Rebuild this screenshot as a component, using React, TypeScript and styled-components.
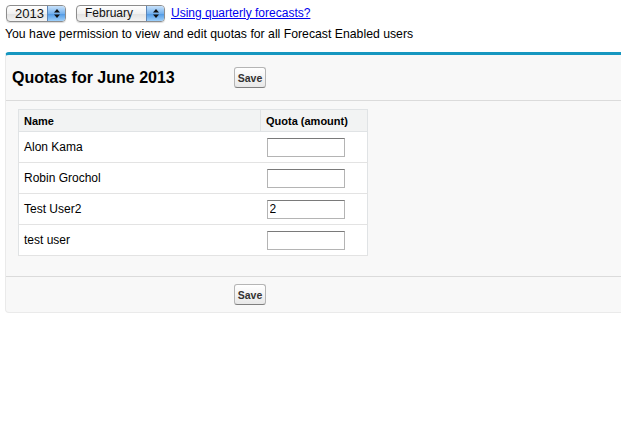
import React from "react";
import styled, { createGlobalStyle } from "styled-components";

const Global = createGlobalStyle`
  html, body { margin: 0; padding: 0; background: #fff; overflow-x: hidden; }
  body { font-family: "Liberation Sans", Arial, sans-serif; color: #000; }
`;

const Page = styled.div`
  padding: 4px 0 0 5px;
`;

const TopBar = styled.div`
  display: flex;
  align-items: center;
  padding-left: 1px;
  height: 18px;
`;

const SelectBox = styled.div<{ $w: number; $mr: number }>`
  width: ${(p) => p.$w}px;
  height: 17px;
  margin-right: ${(p) => p.$mr}px;
  box-sizing: border-box;
  border: 1px solid #8d8d8d;
  border-radius: 4px;
  background: linear-gradient(#ffffff, #f1f1f1 50%, #e2e2e2 51%, #f4f4f4);
  display: flex;
  align-items: stretch;
  overflow: hidden;
  box-shadow: 0 1px 1px rgba(0, 0, 0, 0.15);
`;

const SelectLabel = styled.span<{ $fs: number }>`
  flex: 1;
  font-size: ${(p) => p.$fs}px;
  line-height: 15px;
  padding-left: 8px;
  color: #111;
`;

const SelectArrow = styled.span`
  width: 17px;
  border-left: 1px solid #5d86b8;
  background: linear-gradient(#c8e2fb, #76b2ee 50%, #4d97e4 51%, #9ed0fb);
  display: flex;
  align-items: center;
  justify-content: center;
`;

const Link = styled.a`
  font-size: 12px;
  color: #0000ee;
  text-decoration: underline;
  line-height: 15px;
`;

const Notice = styled.div`
  font-size: 12.25px;
  line-height: 14px;
  margin-top: 5px;
`;

const Panel = styled.div`
  margin-top: 11px;
  margin-right: -6px;
  background: #f8f8f8;
  border-top: 3px solid #1797c0;
  border-left: 1px solid #eaeaea;
  border-bottom: 1px solid #eaeaea;
  border-radius: 4px;
`;

const PanelHeader = styled.div`
  display: flex;
  align-items: center;
  height: 45px;
  border-bottom: 1px solid #dbdbdb;
  padding-left: 6px;
`;

const Title = styled.h2`
  margin: 0;
  width: 222px;
  font-size: 16px;
  font-weight: bold;
  line-height: 18px;
`;

const Button = styled.button`
  width: 32px;
  height: 21px;
  padding: 0;
  font-family: "Liberation Sans", Arial, sans-serif;
  font-size: 10.5px;
  font-weight: bold;
  color: #333;
  border: 1px solid #b5b5b5;
  border-bottom-color: #7f7f7f;
  border-radius: 3px;
  background: linear-gradient(#ffffff, #f4f4f4 50%, #e8e8e8);
`;

const PanelBody = styled.div`
  padding: 8px 0 20px 12px;
`;

const Table = styled.table`
  border-collapse: collapse;
  width: 350px;
  background: #fff;
  border: 1px solid #e0e3e5;
`;

const Th = styled.th<{ $w?: number }>`
  background: #f2f3f3;
  text-align: left;
  font-size: 11px;
  font-weight: bold;
  color: #000;
  height: 21px;
  padding: 0 5px;
  border-bottom: 1px solid #e0e3e5;
  border-right: 1px solid #e0e3e5;
  ${(p) => (p.$w ? `width: ${p.$w}px;` : "")}
`;

const Td = styled.td`
  font-size: 12px;
  height: 30px;
  padding: 0 5px;
  border-bottom: 1px solid #e3e3e3;
`;

const QuotaInput = styled.input`
  box-sizing: border-box;
  width: 78px;
  height: 19px;
  margin-left: 1px;
  padding: 1px 2px;
  font-family: "Liberation Sans", Arial, sans-serif;
  font-size: 12px;
  border: 1px solid #b4b4b4;
  border-top-color: #7a7a7a;
  background: #fff;
  display: block;
`;

const PanelFooter = styled.div`
  display: flex;
  align-items: center;
  height: 35px;
  border-top: 1px solid #dbdbdb;
  padding-left: 228px;
`;

const Arrows = () => (
  <svg width="8" height="11" viewBox="0 0 8 11">
    <path d="M4 1 L7 4.5 H1 Z" fill="#111" />
    <path d="M4 10 L7 6.5 H1 Z" fill="#111" />
  </svg>
);

const rows = [
  { name: "Alon Kama", value: "" },
  { name: "Robin Grochol", value: "" },
  { name: "Test User2", value: "2" },
  { name: "test user", value: "" },
];

export default function App() {
  return (
    <Page>
      <Global />
      <TopBar>
        <SelectBox $w={60} $mr={10}>
          <SelectLabel $fs={13}>2013</SelectLabel>
          <SelectArrow>
            <Arrows />
          </SelectArrow>
        </SelectBox>
        <SelectBox $w={89} $mr={6}>
          <SelectLabel $fs={12}>February</SelectLabel>
          <SelectArrow>
            <Arrows />
          </SelectArrow>
        </SelectBox>
        <Link href="#">Using quarterly forecasts?</Link>
      </TopBar>
      <Notice>You have permission to view and edit quotas for all Forecast Enabled users</Notice>
      <Panel>
        <PanelHeader>
          <Title>Quotas for June 2013</Title>
          <Button>Save</Button>
        </PanelHeader>
        <PanelBody>
          <Table>
            <thead>
              <tr>
                <Th $w={231}>Name</Th>
                <Th>Quota (amount)</Th>
              </tr>
            </thead>
            <tbody>
              {rows.map((r) => (
                <tr key={r.name}>
                  <Td>{r.name}</Td>
                  <Td>
                    <QuotaInput defaultValue={r.value} />
                  </Td>
                </tr>
              ))}
            </tbody>
          </Table>
        </PanelBody>
        <PanelFooter>
          <Button>Save</Button>
        </PanelFooter>
      </Panel>
    </Page>
  );
}
